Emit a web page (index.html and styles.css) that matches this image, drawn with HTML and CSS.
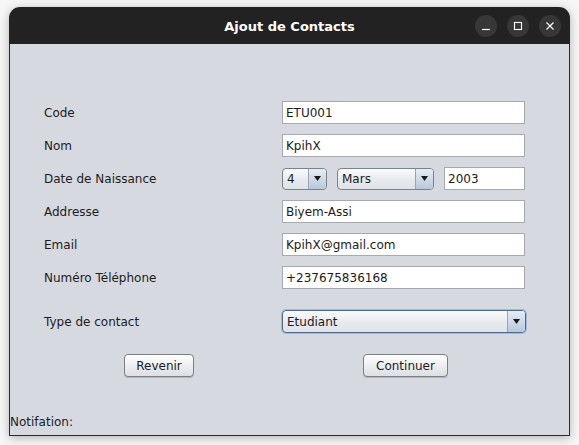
FILE: index.html
```html
<!DOCTYPE html>
<html lang="fr">
<head>
<meta charset="utf-8">
<title>Ajout de Contacts</title>
<link rel="stylesheet" href="styles.css">
</head>
<body>
<div class="window">
  <div class="titlebar">
    <span class="title">Ajout de Contacts</span>
    <div class="controls">
      <span class="ctl"><svg width="10" height="10" viewBox="0 0 10 10"><path d="M1 8.5h8" stroke="#fff" stroke-width="1.2"/></svg></span>
      <span class="ctl"><svg width="10" height="10" viewBox="0 0 10 10"><rect x="1.5" y="1.5" width="7" height="7" fill="none" stroke="#fff" stroke-width="1.1"/></svg></span>
      <span class="ctl"><svg width="10" height="10" viewBox="0 0 10 10"><path d="M1.5 1.5l7 7M8.5 1.5l-7 7" stroke="#fff" stroke-width="1.2"/></svg></span>
    </div>
  </div>
  <div class="content">
    <div class="form">
      <div class="row"><span class="label">Code</span><div class="field">ETU001</div></div>
      <div class="row"><span class="label">Nom</span><div class="field">KpihX</div></div>
      <div class="row"><span class="label">Date de Naissance</span>
        <div class="date">
          <div class="combo day"><span class="cv">4</span><span class="arrow"><svg width="7" height="5" viewBox="0 0 7 5"><path d="M0 0h7L3.5 5z" fill="#1a1a1a"/></svg></span></div>
          <div class="combo month"><span class="cv">Mars</span><span class="arrow"><svg width="7" height="5" viewBox="0 0 7 5"><path d="M0 0h7L3.5 5z" fill="#1a1a1a"/></svg></span></div>
          <div class="field year">2003</div>
        </div>
      </div>
      <div class="row"><span class="label">Addresse</span><div class="field">Biyem-Assi</div></div>
      <div class="row"><span class="label">Email</span><div class="field">KpihX@gmail.com</div></div>
      <div class="row"><span class="label">Numéro Téléphone</span><div class="field">+237675836168</div></div>
      <div class="row type"><span class="label">Type de contact</span>
        <div class="combo wide focus"><span class="cv">Etudiant</span><span class="arrow"><svg width="7" height="5" viewBox="0 0 7 5"><path d="M0 0h7L3.5 5z" fill="#1a1a1a"/></svg></span></div>
      </div>
    </div>
    <div class="buttons">
      <button class="btn back">Revenir</button>
      <button class="btn next">Continuer</button>
    </div>
    <div class="notif">Notifation:</div>
  </div>
</div>
</body>
</html>
```
FILE: styles.css
```css
* { box-sizing: border-box; }
html, body { margin: 0; padding: 0; background: #f6f6f6; }
body {
  width: 579px; height: 445px; overflow: hidden;
  font-family: "DejaVu Sans", "Liberation Sans", sans-serif;
  font-size: 12px; color: #1c1c1c;
}
.window {
  margin: 7px 0 0 9px;
  width: 561px; height: 429px;
  border-radius: 11px 11px 0 0;
  box-shadow: 0 2px 10px rgba(0,0,0,0.28);
  display: flex; flex-direction: column;
}
.titlebar {
  height: 37px; background: #222222;
  border-radius: 11px 11px 0 0;
  position: relative;
  display: flex; align-items: center; justify-content: center;
}
.title {
  color: #fff; font-weight: bold; font-size: 13px;
  font-family: "DejaVu Sans", sans-serif;
  padding-top: 2px;
}
.controls {
  position: absolute; right: 9px; top: 8px;
  display: flex; gap: 10px;
}
.ctl {
  width: 22px; height: 22px; border-radius: 50%;
  background: #373737;
  display: flex; align-items: center; justify-content: center;
}
.content {
  flex: 1; background: #d6d9df;
  border: 1px solid #2b2b2b; border-top: none;
  display: flex; flex-direction: column;
}
.form {
  padding: 57px 0 0 34px;
  display: flex; flex-direction: column; gap: 10px;
}
.row { display: flex; align-items: center; height: 23px; }
.row.type { margin-top: 11px; }
.label { width: 238px; }
.field {
  width: 243px; height: 23px; background: #fff;
  border: 1px solid #a6a9ae; padding: 0 3px;
  display: flex; align-items: center;
}
.date { display: flex; align-items: center; gap: 10px; }
.field.year { width: 81px; }
.combo {
  height: 22px; display: flex; align-items: stretch;
  border: 1px solid #7c828c; border-radius: 4px;
  background: linear-gradient(#fbfbfc, #e5e8ec 60%, #dfe2e7);
  overflow: hidden;
}
.combo .cv { flex: 1; padding-left: 4px; display: flex; align-items: center; }
.combo .arrow {
  width: 18px; display: flex; align-items: center; justify-content: center;
  border-left: 1px solid #9aa3af;
  background: linear-gradient(#e6edf5, #b8c8da);
}
.combo.day { width: 45px; }
.combo.month { width: 97px; }
.combo.wide { width: 244px; height: 23px; }
.combo.focus { border: 1px solid #4d6a92; box-shadow: 0 0 0 1px #9bbbe5; }
.buttons { display: flex; margin-top: 21px; height: 23px; }
.btn {
  height: 23px; font: inherit; color: #1c1c1c;
  border: 1px solid #7d7f83; border-radius: 4px;
  background: linear-gradient(#ffffff, #eceef0 50%, #dcdfe3);
  box-shadow: 0 1px 0 #b0b3b8;
  padding: 0;
}
.btn.back { width: 70px; margin-left: 114px; }
.btn.next { width: 85px; margin-left: 169px; }
.notif { margin-top: auto; margin-bottom: 6px; }
```
